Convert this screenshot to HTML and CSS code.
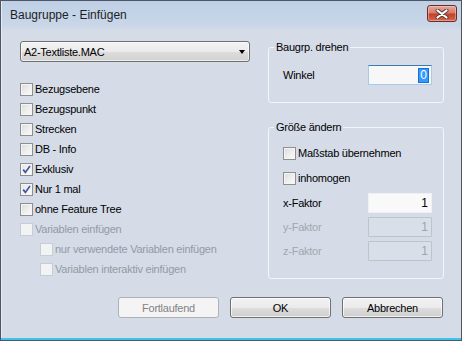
FILE: index.html
```html
<!DOCTYPE html>
<html lang="de">
<head>
<meta charset="utf-8">
<title>Baugruppe - Einfügen</title>
<link rel="stylesheet" href="styles.css">
</head>
<body>
<div class="window">
  <div class="titlebar">
    <span class="title">Baugruppe - Einfügen</span>
    <button class="close" aria-label="Schließen">
      <svg width="14" height="10" viewBox="0 0 14 10">
        <path d="M2.5 1.5 L11.5 8.5 M11.5 1.5 L2.5 8.5" stroke="#5a3a36" stroke-width="4" stroke-linecap="round"/>
        <path d="M2.5 1.5 L11.5 8.5 M11.5 1.5 L2.5 8.5" stroke="#ffffff" stroke-width="2.2" stroke-linecap="round"/>
      </svg>
    </button>
  </div>
  <div class="body">
    <div class="left">
      <div class="combo">
        <span>A2-Textliste.MAC</span>
        <span class="arrow"></span>
      </div>
      <div class="checklist">
        <label class="check"><span class="box"></span>Bezugsebene</label>
        <label class="check"><span class="box"></span>Bezugspunkt</label>
        <label class="check"><span class="box"></span>Strecken</label>
        <label class="check"><span class="box"></span>DB - Info</label>
        <label class="check"><span class="box checked"><svg width="11" height="11" viewBox="0 0 11 11"><path d="M2.2 5.6 L4.4 8.4 L9 2" fill="none" stroke="#3f57a0" stroke-width="1.7"/></svg></span>Exklusiv</label>
        <label class="check"><span class="box checked"><svg width="11" height="11" viewBox="0 0 11 11"><path d="M2.2 5.6 L4.4 8.4 L9 2" fill="none" stroke="#3f57a0" stroke-width="1.7"/></svg></span>Nur 1 mal</label>
        <label class="check"><span class="box"></span>ohne Feature Tree</label>
        <label class="check disabled"><span class="box"></span>Variablen einfügen</label>
        <label class="check disabled indent"><span class="box"></span>nur verwendete Variablen einfügen</label>
        <label class="check disabled indent"><span class="box"></span>Variablen interaktiv einfügen</label>
      </div>
    </div>
    <div class="right">
      <fieldset class="group">
        <legend>Baugrp. drehen</legend>
        <div class="group-inner first">
          <div class="field">
            <span>Winkel</span>
            <span class="input focused"><span class="sel">0</span></span>
          </div>
        </div>
      </fieldset>
      <fieldset class="group second">
        <legend>Größe ändern</legend>
        <div class="group-inner second-inner">
          <label class="check grp"><span class="box"></span>Maßstab übernehmen</label>
          <label class="check grp"><span class="box"></span>inhomogen</label>
          <div class="field xf">
            <span>x-Faktor</span>
            <span class="input plain">1</span>
          </div>
          <div class="field disabled">
            <span>y-Faktor</span>
            <span class="input off">1</span>
          </div>
          <div class="field disabled">
            <span>z-Faktor</span>
            <span class="input off">1</span>
          </div>
        </div>
      </fieldset>
    </div>
  </div>
  <div class="footer">
    <button class="btn disabled">Fortlaufend</button>
    <button class="btn">OK</button>
    <button class="btn">Abbrechen</button>
  </div>
</div>
</body>
</html>
```

FILE: styles.css
```css
* { box-sizing: border-box; }

html, body {
  margin: 0;
  padding: 0;
  background: #d5dce8;
}

body {
  font-family: "Liberation Sans", Arial, sans-serif;
  font-size: 11px;
  letter-spacing: -0.25px;
  color: #000;
}

.window {
  width: 462px;
  height: 341px;
  border: 1px solid #4c5664;
  display: flex;
  flex-direction: column;
  background: linear-gradient(#bfd0e6 0px, #c9d6e8 24px, #d5dce8 30px, #d5dce8 100%);
  box-shadow: inset 0 -2px 0 #3cc4ee, inset 1px 0 0 #e4ebf4;
}

.titlebar {
  height: 27px;
  display: flex;
  align-items: center;
  padding-left: 9px;
}

.title {
  font-size: 12px;
  letter-spacing: 0;
  color: #1b1f26;
}

.close {
  margin-left: auto;
  margin-right: 4px;
  align-self: flex-start;
  margin-top: 4px;
  width: 30px;
  height: 17px;
  border: 1px solid #6e2b22;
  border-radius: 3px;
  background: linear-gradient(#e5a99d 0%, #d77a68 45%, #c4402b 55%, #d2694f 100%);
  display: flex;
  align-items: center;
  justify-content: center;
  padding: 0;
  box-shadow: inset 0 0 0 1px rgba(255, 220, 210, 0.45);
}

.body {
  display: flex;
  padding: 13px 0 0 19px;
}

.left {
  width: 230px;
  display: flex;
  flex-direction: column;
}

.combo {
  height: 21px;
  border: 1px solid #707070;
  border-radius: 3px;
  background: linear-gradient(#f3f3f3 0%, #ebebeb 50%, #dddddd 51%, #d2d2d2 100%);
  display: flex;
  align-items: center;
  padding: 0 0 0 3px;
  box-shadow: inset 0 0 0 1px rgba(255, 255, 255, 0.6);
}

.arrow {
  margin-left: auto;
  margin-right: 4px;
  width: 0;
  height: 0;
  border-left: 3.5px solid transparent;
  border-right: 3.5px solid transparent;
  border-top: 4px solid #000;
}

.checklist {
  margin-top: 17px;
  display: flex;
  flex-direction: column;
}

.check {
  height: 20px;
  display: flex;
  align-items: center;
  gap: 2px;
}

.check.indent {
  padding-left: 20px;
}

.box {
  width: 13px;
  height: 13px;
  border: 1px solid #8e8f8f;
  background: linear-gradient(135deg, #dcdcdc 0%, #f0f0f0 60%, #fbfbfb 100%);
  box-shadow: inset 0 0 0 1px #f4f4f4;
  display: flex;
  align-items: center;
  justify-content: center;
  flex: none;
}

.box.checked {
  background: linear-gradient(135deg, #e4e4e4 0%, #f6f6f6 70%, #ffffff 100%);
}

.check.disabled {
  color: #949aa3;
}

.check.disabled .box {
  border-color: #c8cdd3;
  background: #f2f3f5;
  box-shadow: none;
}

.right {
  width: 176px;
  margin-left: 18px;
  display: flex;
  flex-direction: column;
}

.group {
  margin: 0;
  padding: 0;
  border: 1px solid #f3f5f9;
  border-radius: 3px;
  min-width: 0;
}

.group legend {
  margin-left: 5px;
  padding: 0 2px;
  line-height: 13px;
  font-size: 11px;
}

.group.second {
  margin-top: 18px;
}

.group-inner {
  padding: 11px 11px 17px 14px;
  display: flex;
  flex-direction: column;
}

.second-inner {
  padding-top: 9px;
  padding-bottom: 17px;
}

.check.grp {
  height: 20px;
  margin-bottom: 5px;
}

.field {
  height: 20px;
  display: flex;
  align-items: center;
  justify-content: space-between;
}

.field.disabled {
  margin-top: 4px;
  color: #a2a7ae;
}

.input {
  width: 64px;
  height: 20px;
  display: flex;
  align-items: center;
  justify-content: flex-end;
  padding-right: 3px;
  font-size: 12px;
  letter-spacing: 0;
}

.input.focused {
  background: #f7f7f7;
  border: 1px solid #a6cbe6;
  border-top-color: #3d7bad;
  padding-right: 2px;
}

.sel {
  background: #3399ff;
  color: #fff;
  padding: 0 1px;
  line-height: 13px;
  border: 1px solid #1a6fd0;
}

.input.plain {
  background: #f9f9f9;
  border: 1px solid #eef0f3;
}

.input.off {
  border: 1px solid #bdc3ca;
  border-radius: 1px;
  background: #d9dfe9;
  color: #9ea4ab;
}

.footer {
  display: flex;
  justify-content: flex-end;
  gap: 11px;
  margin-top: 18px;
  padding-right: 18px;
}

.btn {
  width: 101px;
  height: 21px;
  border: 1px solid #707070;
  border-radius: 3px;
  background: linear-gradient(#f2f2f2 0%, #ebebeb 50%, #dddddd 51%, #cfcfcf 100%);
  box-shadow: inset 0 0 0 1px rgba(255, 255, 255, 0.7);
  font-family: "Liberation Sans", Arial, sans-serif;
  font-size: 11px;
  letter-spacing: -0.25px;
  color: #000;
  padding: 0;
}

.btn.disabled {
  border-color: #adb2b5;
  background: #f4f4f4;
  box-shadow: none;
  color: #838383;
}
```
